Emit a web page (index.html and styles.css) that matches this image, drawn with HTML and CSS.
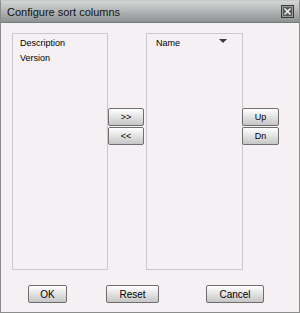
FILE: index.html
```html
<!DOCTYPE html>
<html>
<head>
<meta charset="utf-8">
<link rel="stylesheet" href="styles.css">
</head>
<body>
<div class="window">
  <div class="titlebar">
    <span class="title">Configure sort columns</span>
    <span class="close"><svg width="9" height="9" viewBox="0 0 9 9"><path d="M1.5 1.5 L7.5 7.5 M7.5 1.5 L1.5 7.5" stroke="#fff" stroke-width="1.4"/></svg></span>
  </div>
  <div class="main">
    <div class="row">
      <div class="list left">
        <div class="item">Description</div>
        <div class="item">Version</div>
      </div>
      <div class="btncol mid">
        <button class="btn small">&gt;&gt;</button>
        <button class="btn small">&lt;&lt;</button>
      </div>
      <div class="list right">
        <div class="item name"><span>Name</span><span class="tri"></span></div>
      </div>
      <div class="btncol side">
        <button class="btn small">Up</button>
        <button class="btn small">Dn</button>
      </div>
    </div>
    <div class="bottom">
      <button class="btn ok">OK</button>
      <button class="btn reset">Reset</button>
      <button class="btn cancel">Cancel</button>
    </div>
  </div>
</div>
</body>
</html>
```
FILE: styles.css
```css
html, body {
  margin: 0;
  padding: 0;
  background: #f4f0f3;
}
.window {
  width: 300px;
  height: 313px;
  box-sizing: border-box;
  border: 1px solid #8c8c8c;
  border-top-color: #c8c8c8;
  background: #f4f0f3;
  font-family: "Liberation Sans", Arial, sans-serif;
  color: #000;
}
.titlebar {
  height: 21px;
  border-bottom: 1px solid #7a7c7c;
  background: linear-gradient(#d4d6d6, #8e9292);
  display: flex;
  align-items: center;
  justify-content: space-between;
  padding: 0 5px 0 6px;
}
.title {
  font-size: 11px;
  color: #111;
  position: relative;
  top: 0px;
}
.close {
  width: 13px;
  height: 13px;
  box-sizing: border-box;
  border: 1px solid #3a3a3a;
  background: #5a5a5a;
  box-shadow: inset 0 0 0 1px #9a9a9a;
  display: flex;
  align-items: center;
  justify-content: center;
}
.main {
  padding: 10px 0 0 11px;
}
.row {
  display: flex;
  align-items: flex-start;
}
.list {
  height: 237px;
  box-sizing: border-box;
  border: 1px solid #cbc7cb;
  background: #f4f0f3;
  padding-top: 2px;
  font-size: 9px;
}
.list.left {
  width: 96px;
  padding-left: 7px;
}
.list.right {
  width: 97px;
  margin-left: 2px;
  padding-left: 9px;
}
.item {
  line-height: 15px;
  height: 15px;
}
.name {
  display: flex;
  justify-content: space-between;
  align-items: flex-start;
  padding-right: 15px;
}
.tri {
  width: 0;
  height: 0;
  margin-top: 3px;
  border-left: 4px solid transparent;
  border-right: 4px solid transparent;
  border-top: 4px solid #3a3a3a;
}
.btncol {
  display: flex;
  flex-direction: column;
  gap: 1px;
  margin-top: 75px;
}
.btncol.mid {
  width: 36px;
}
.btncol.side {
  width: 37px;
  margin-left: -1px;
}
.btn {
  box-sizing: border-box;
  border: 1px solid #6e6e6e;
  border-radius: 2px;
  background: linear-gradient(#ffffff, #c6c6c6);
  font-family: "Liberation Sans", Arial, sans-serif;
  font-size: 10px;
  color: #000;
  padding: 0;
  margin: 0;
  text-align: center;
}
.btn.small {
  height: 18px;
  width: 100%;
  font-size: 9px;
}
.bottom {
  display: flex;
  margin-top: 15px;
  padding-left: 16px;
}
.bottom .btn {
  height: 18px;
}
.ok {
  width: 39px;
}
.reset {
  width: 53px;
  margin-left: 39px;
}
.cancel {
  width: 58px;
  margin-left: 47px;
}
```
